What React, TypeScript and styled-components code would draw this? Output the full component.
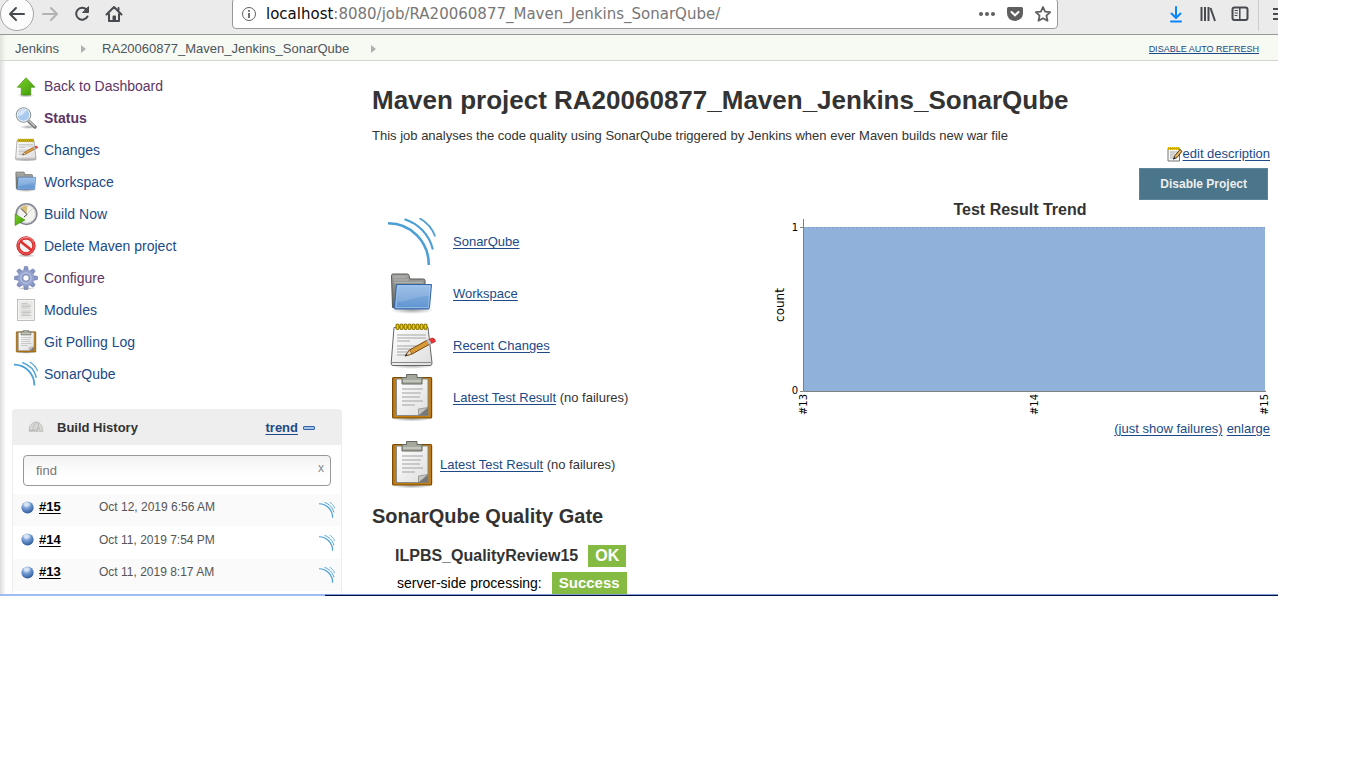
import React from "react";
import styled, { createGlobalStyle } from "styled-components";

const sans = `"Liberation Sans", Arial, sans-serif`;
const ui = `"DejaVu Sans", sans-serif`;

const GlobalStyle = createGlobalStyle`
  * { box-sizing: border-box; }
  body { margin: 0; background: #fff; color: #333; font: 13px/18px ${sans}; }
  h1, h2, h3, p, ul { margin: 0; padding: 0; }
  ul { list-style: none; }
  svg { display: block; flex: none; }
  button { cursor: pointer; }
`;

const Screen = styled.div`
  margin-right: 88px;
  overflow: hidden;
`;

/* Browser toolbar */
const Toolbar = styled.header`
  display: flex;
  align-items: center;
  height: 35px;
  padding-bottom: 7px;
  background: #ebebeb;
  border-bottom: 1px solid #999;
`;
const BackButton = styled.button`
  display: flex;
  align-items: center;
  justify-content: center;
  flex: none;
  width: 34px;
  height: 34px;
  padding: 0;
  border: 1px solid #a6a6a6;
  border-radius: 50%;
  background: #fcfcfc;
`;
const ToolButton = styled.button`
  display: flex;
  align-items: center;
  justify-content: center;
  flex: none;
  width: 32px;
  height: 28px;
  padding: 0;
  border: 0;
  background: none;
`;
const AddressBox = styled.div`
  display: flex;
  align-items: center;
  flex: 0 1 826px;
  min-width: 0;
  height: 31px;
  margin-left: 102px;
  padding: 0 0 0 8px;
  border: 1px solid #999;
  border-radius: 4px;
  background: #fff;
`;
const Address = styled.div`
  flex: 1;
  min-width: 0;
  overflow: hidden;
  margin-left: 9px;
  white-space: nowrap;
  font: 15px/20px ${ui};
  color: #777;
  b { font-weight: 400; color: #0c0c0d; }
`;
const SlimButton = styled(ToolButton)`
  width: 28px;
`;
const ToolGroup = styled.div`
  display: flex;
  flex: 1 0 120px;
  justify-content: flex-end;
  align-items: center;
`;
const MenuSlot = styled.div`
  display: flex;
  align-items: center;
  justify-content: flex-end;
  width: 20px;
  height: 34px;
  margin-left: 2px;
  border-left: 1px solid #ccc;
`;

/* Breadcrumb bar */
const Crumbs = styled.nav`
  display: flex;
  align-items: center;
  height: 26px;
  padding: 2px 19px 0 15px;
  border-bottom: 1px solid #d3d7cf;
  background: linear-gradient(90deg, #dfe2dc, transparent 6px) #f6faf2;
`;
const Crumb = styled.a`
  color: #4d545d;
  text-decoration: none;
`;
const CrumbArrow = styled.span`
  margin: 0 16px 0 22px;
  border: 4px solid transparent;
  border-left: 5px solid #b0b0b0;
  border-right: 0;
`;
const RefreshLink = styled.a`
  margin-left: auto;
  font-size: 9px;
  line-height: 12px;
  text-transform: uppercase;
  color: #204a87;
  border-bottom: 1px solid #204a87;
  text-decoration: none;
  height: 11px;
`;

const Link = styled.a`
  color: #204a87;
  text-decoration: underline;
  text-underline-offset: 2px;
`;

const Body = styled.div`
  display: flex;
  align-items: stretch;
  background: linear-gradient(90deg, #dcdcdc, transparent 6px);
`;
const Sidebar = styled.aside`
  display: flex;
  flex-direction: column;
  flex: none;
  width: 342px;
  padding: 9px 0 0 12px;
`;
const Task = styled.li`
  height: 32px;
`;
const TaskLink = styled.a<{ $visited?: boolean; $bold?: boolean }>`
  display: inline-flex;
  align-items: center;
  gap: 6px;
  height: 32px;
  padding-left: 2px;
  font-size: 14px;
  font-weight: ${(p) => (p.$bold ? 700 : 400)};
  color: ${(p) => (p.$visited ? "#5c3566" : "#204a87")};
  text-decoration: none;
`;

/* Build history */
const Panel = styled.section`
  flex: 1;
  margin-top: 19px;
  border: 1px solid #eee;
  border-bottom: 0;
  border-radius: 4px 4px 0 0;
  background: #fff;
`;
const PanelHead = styled.div`
  display: flex;
  align-items: center;
  height: 35px;
  padding: 0 26px 0 15px;
  background: #eee;
  font-weight: 700;
`;
const PanelTitle = styled.h3`
  flex: 1;
  margin-left: 13px;
  font-size: 13px;
`;
const Collapse = styled.button`
  width: 12px;
  height: 4px;
  margin-left: 5px;
  padding: 0;
  border: 1px solid #3465a4;
  border-radius: 1px;
  background: #a5c3ea;
`;
const Search = styled.div`
  display: flex;
  height: 31px;
  margin: 10px 10px 8px;
  border: 1px solid #999;
  border-radius: 4px;
  background: linear-gradient(#f3f3f3, #fff 20px);
`;
const SearchInput = styled.input`
  flex: 1;
  min-width: 0;
  padding: 0 12px;
  border: 0;
  outline: 0;
  background: none;
  font: 13px ${sans};
  &::placeholder { color: #777; opacity: 1; }
`;
const ClearButton = styled.button`
  padding: 0 6px 6px;
  border: 0;
  background: none;
  color: #888;
  font: 12px ${sans};
`;
const Builds = styled.table`
  width: 100%;
  border-collapse: collapse;
  font-size: 12px;
  tr:nth-child(odd) { background: #fafafa; }
  td { height: 32px; padding: 0 0 6px; vertical-align: middle; color: #555; }
  tr:nth-child(even) td { height: 33px; }
  td:last-child { padding: 0 6px 0 0; }
`;
const BuildCell = styled.div`
  display: flex;
  align-items: center;
  gap: 5px;
  padding-left: 8px;
`;
const BuildLink = styled.a`
  font-weight: 700;
  font-size: 13px;
  line-height: 16px;
  color: #000;
  text-underline-offset: 2px;
`;
const EndIcon = styled.div`
  display: flex;
  justify-content: flex-end;
`;

/* Main panel */
const Main = styled.main`
  flex: 1;
  min-width: 0;
  padding: 23px 8px 0 30px;
`;
const Title = styled.h1`
  font-size: 26px;
  line-height: 32px;
  white-space: nowrap;
`;
const Description = styled.p`
  margin-top: 11px;
`;
const Columns = styled.div`
  display: flex;
  justify-content: space-between;
  align-items: flex-start;
`;
const LinkList = styled.ul`
  padding: 71px 0 0 16px;
`;
const BigLink = styled.li<{ $gap: number; $top?: number }>`
  display: flex;
  align-items: center;
  gap: ${(p) => p.$gap}px;
  height: 52px;
  margin-top: ${(p) => p.$top || 0}px;
`;
const Aside = styled.div`
  display: flex;
  flex-direction: column;
  align-items: flex-end;
  width: 500px;
`;
const EditLine = styled.div`
  display: flex;
  align-items: center;
  height: 18px;
`;
const DisableButton = styled.button`
  height: 32px;
  margin: 5px 2px 0 0;
  padding: 0 20px;
  border: 1px solid #5d8599;
  background: #4b758b;
  color: #eee;
  font: 700 12px ${sans};
`;
const ChartTitle = styled.h3`
  width: 100%;
  padding-top: 1px;
  font-size: 16px;
  line-height: 18px;
  text-align: center;
`;
const ChartLinks = styled.div`
  display: flex;
  gap: 4px;
  margin-top: 1px;
`;
const Gate = styled.section`
  margin-top: 13px;
  h2 { font-size: 20px; line-height: 24px; }
`;
const GateRow = styled.div<{ $strong?: boolean }>`
  display: flex;
  align-items: center;
  gap: 10px;
  height: 22px;
  margin-top: ${(p) => (p.$strong ? 17 : 5)}px;
  padding-left: ${(p) => (p.$strong ? 23 : 25)}px;
  font-size: ${(p) => (p.$strong ? 16 : 14)}px;
  font-weight: ${(p) => (p.$strong ? 700 : 400)};
  color: ${(p) => (p.$strong ? "#333" : "#000")};
`;
const Badge = styled.span<{ $large?: boolean }>`
  padding: 0 7px;
  background: #85bb43;
  color: #fff;
  font-size: ${(p) => (p.$large ? 16 : 15)}px;
  font-weight: 700;
  line-height: 22px;
`;
const BottomEdge = styled.footer`
  height: 2px;
  background: linear-gradient(90deg, #9dbcf0 325px, transparent 325px),
    linear-gradient(#7f9fdc 1px, #04103c 1px);
`;

type IconProps = { size?: number };

const Svg = ({ size = 24, children }: IconProps & { children: React.ReactNode }) => (
  <svg width={size} height={size} viewBox="0 0 48 48" fill="none" aria-hidden="true">{children}</svg>
);

const HiddenDefs = styled.svg`
  position: absolute;
`;
const Gradients = () => (
  <HiddenDefs width="0" height="0" aria-hidden="true">
    <defs>
      <linearGradient id="green" x1="0" y1="0" x2="1" y2="1"><stop stopColor="#7ed32c" /><stop offset="1" stopColor="#3b9a06" /></linearGradient>
      <linearGradient id="blue" x1="0" y1="0" x2="0" y2="1"><stop stopColor="#8db6e4" /><stop offset="1" stopColor="#5f93d0" /></linearGradient>
      <linearGradient id="grey" x1="0" y1="0" x2="0" y2="1"><stop stopColor="#a5a6a2" /><stop offset="1" stopColor="#60625f" /></linearGradient>
      <linearGradient id="paper" x1="0" y1="0" x2="1" y2="1"><stop stopColor="#fff" /><stop offset="1" stopColor="#dedede" /></linearGradient>
      <radialGradient id="ball" cx=".4" cy=".25" r=".75"><stop stopColor="#d4e4f7" /><stop offset=".5" stopColor="#7199d0" /><stop offset="1" stopColor="#2d5a9c" /></radialGradient>
      <radialGradient id="shade"><stop stopColor="#000" stopOpacity=".35" /><stop offset="1" stopColor="#000" stopOpacity="0" /></radialGradient>
    </defs>
  </HiddenDefs>
);

const SonarIcon = ({ size, weight = 2.6 }: IconProps & { weight?: number }) => (
  <Svg size={size}>
    <g stroke="#4b9fd5">
      <path d="M0 5.300C23 5.300 40.800 23.500 40.800 47" strokeWidth={weight} />
      <path d="M16.500 1.200C30.500 5.500 41.500 17 44.800 31.500" strokeWidth={weight * 0.8} />
      <path d="M31.500 .2C38.500 4 44.500 11 47.200 18.500" strokeWidth={weight * 0.65} />
    </g>
  </Svg>
);
const FolderIcon = ({ size }: IconProps) => (
  <Svg size={size}>
    <ellipse cx="24" cy="40" rx="22" ry="4" fill="url(#shade)" />
    <path d="M4.500 37.500L3.500 5.500Q3.500 4 5 4H19.500Q20.500 4 21 5.500L21.800 9H35.500Q37 9 37 10.500V36z" fill="url(#grey)" stroke="#555753" />
    <path d="M6 7H18M6 10H20M6 12.500H35" stroke="#c0c1be" strokeWidth=".7" />
    <path d="M8.500 14.500H43.500L41.500 37.500Q41.300 39 40 39H7Q6 39 6.200 37.500z" fill="url(#blue)" stroke="#3465a4" />
    <path d="M9.800 15.800H42L40.500 37.500H8z" stroke="#b1d0f2" strokeOpacity=".6" />
    <path d="M10 16H42L41 26C28 26 22 31 9 32z" fill="#fff" opacity=".14" />
  </Svg>
);
const Rings = () => (
  <g stroke="#8c7200" strokeWidth="1.200" fill="#edd400">
    {[8, 12, 16, 20, 24, 28, 32, 36].map((x) => <rect key={x} x={x} y="3" width="3" height="5.500" rx="1.500" />)}
  </g>
);
const NotepadIcon = ({ size }: IconProps) => (
  <Svg size={size}>
    <g transform="translate(0 -1)">
      <ellipse cx="24" cy="44.500" rx="22" ry="3.500" fill="url(#shade)" />
      <path d="M6 6.500H40L44 42Q44 44.500 42 44.500H5Q3 44.500 3.200 42z" fill="url(#paper)" stroke="#666" />
      <path d="M4 41.500H43" stroke="#888" />
      <Rings />
      <path d="M9 14H38M9 17H38M9 20H22M9 25H32M9 28H28M9 31H24M9 34H20" stroke="#a5a5a5" />
      <path d="M17 35l4.500-6L39.500 19l2.500 4L24 33z" fill="#d99a3c" stroke="#784708" />
      <path d="M17 35l4.500-6 2.500 4z" fill="#e8d4b0" stroke="#784708" strokeWidth=".7" />
      <path d="M41 18.500l3-1.500q3 0 3.500 3.500l-4 2z" fill="#e33" stroke="#a22" strokeWidth=".7" />
      <path d="M38.500 19.600l2.500-1.200 2.400 4-2.400 1.200z" fill="#c8c8c8" stroke="#999" strokeWidth=".5" />
      <path d="M17 35l1.500-2.200 1 1.500z" fill="#222" />
    </g>
  </Svg>
);
const ClipboardIcon = ({ size }: IconProps) => (
  <Svg size={size}>
    <g transform="translate(0 -1)">
      <ellipse cx="24" cy="46" rx="20" ry="2.500" fill="url(#shade)" />
      <rect x="4.600" y="4.500" width="39" height="40.500" rx="1" fill="#c17d11" stroke="#7a4b05" strokeWidth="1.200" />
      <rect x="8.500" y="6" width="31.500" height="36.500" fill="url(#paper)" stroke="#888a85" />
      <path d="M14 16H35M14 20H33M14 24H32M14 28H35M14 32H27" stroke="#bcbcbc" strokeWidth="1.500" />
      <path d="M40 34.500V42.500H30.500z" fill="#777" /><path d="M30.500 42.500V36L40 34.500z" fill="#c5c7c2" stroke="#777" strokeWidth=".6" />
      <path d="M18.500 4.500V1.500H29V4.500H34V11H14V4.500z" fill="#a5a89c" stroke="#656860" />
      <path d="M15 8H33" stroke="#cdd0c5" strokeWidth="1.500" />
    </g>
  </Svg>
);
const UpIcon = () => (
  <Svg>
    <ellipse cx="24" cy="43" rx="17" ry="4" fill="url(#shade)" />
    <path d="M24 7.500L42 26.500H33.500V42H14.500V26.500H6.500z" fill="url(#green)" stroke="#3a8a05" strokeWidth="1.200" />
  </Svg>
);
const MagnifierIcon = () => (
  <Svg>
    <ellipse cx="29" cy="42" rx="18" ry="4" fill="url(#shade)" />
    <path d="M30 31L42 42" stroke="#777a75" strokeWidth="7" strokeLinecap="round" />
    <path d="M29 29L41 40" stroke="#c8cac6" strokeWidth="2.500" strokeLinecap="round" />
    <circle cx="19" cy="18" r="14.500" fill="#a9c9ee" stroke="#8a8d88" strokeWidth="2" />
    <circle cx="19" cy="18" r="12.500" stroke="#f0f3f6" strokeWidth="2" />
    <path d="M8.500 20C8.500 8 18.500 7 25.500 9C18.500 12 20.500 20 8.500 20z" fill="#fff" opacity=".55" />
  </Svg>
);
const ClockIcon = () => (
  <Svg>
    <circle cx="25" cy="24" r="20.500" fill="#f4f3ee" stroke="#85868f" strokeWidth="3.500" />
    <circle cx="25" cy="24" r="18" stroke="#d0d0dc" strokeWidth="2" />
    <path d="M25 24L13 12Q20 5 27 8z" fill="#d9c07a" />
    <path d="M14 13L26 25L20 30" stroke="#444" strokeWidth="2" />
    <path d="M26 24L37 13" stroke="#aaa" strokeWidth="1" />
    <path d="M2 24L22 36L2 47z" fill="url(#green)" stroke="#347a09" />
  </Svg>
);
const NoEntryIcon = () => (
  <Svg>
    <ellipse cx="24" cy="43" rx="20" ry="4" fill="url(#shade)" />
    <circle cx="24" cy="23.500" r="16" fill="#f4f0f0" stroke="#b81414" strokeWidth="6.500" />
    <circle cx="24" cy="23.500" r="16" stroke="#e84a4a" strokeWidth="4.500" />
    <path d="M12 14L36 33" stroke="#dd3030" strokeWidth="5.500" />
    <path d="M8 18Q12 6 26 6.500Q36 7 40 16" stroke="#f9a8a8" strokeWidth="1.500" />
  </Svg>
);
const GearIcon = () => (
  <Svg>
    <ellipse cx="24" cy="45" rx="18" ry="3" fill="url(#shade)" />
    <g fill="#8796c4" stroke="#5d6b9e" strokeWidth="1">
      {[0, 45, 90, 135, 180, 225, 270, 315].map((a) => (
        <path key={a} d="M18.500 12L21 1H27L29.500 12z" transform={`rotate(${a} 24 24)`} />
      ))}
    </g>
    <circle cx="24" cy="24" r="16" fill="#95a4cf" />
    <circle cx="24" cy="24" r="10.500" stroke="#bcc6e4" strokeWidth="2" />
    <circle cx="24" cy="24" r="6.500" fill="#fff" stroke="#5d6b9e" strokeWidth="1.500" />
  </Svg>
);
const DocIcon = () => (
  <Svg>
    <rect x="7" y="3" width="34" height="42" fill="#e9e9e7" stroke="#aaa" strokeWidth="1.500" />
    <rect x="9" y="5" width="30" height="38" stroke="#fafafa" strokeWidth="1.500" />
    <path d="M15 11H27M15 14H33M15 17H34M15 20H31M15 26H34M15 29H34M15 32H30M15 35H34" stroke="#bbb" strokeWidth="1.500" />
  </Svg>
);
const HelmetIcon = () => (
  <Svg size={16}>
    <g transform="translate(0 -5)">
      <path d="M3 36Q2 22 14 14Q28 6 38 18Q45 26 44 38L34 36V28L28 36z" fill="#d8d8d5" stroke="#b0b0ae" strokeWidth="2" />
      <path d="M14 34Q16 20 25 12M27 34Q34 22 30 12M3 36H30" stroke="#aaa" strokeWidth="2" />
      <path d="M3 39H46" stroke="#c4c4c2" strokeWidth="3" />
    </g>
  </Svg>
);
const BallIcon = () => (
  <Svg size={13}>
    <circle cx="24" cy="24" r="22.500" fill="url(#ball)" />
    <ellipse cx="22" cy="13" rx="12" ry="8" fill="#fff" opacity=".4" />
  </Svg>
);
const NoteEditIcon = () => (
  <svg width="16" height="16" viewBox="0 0 16 16" fill="none" aria-hidden="true">
    <path d="M1 2.500H12.500V15H1z" fill="#f8f8f8" stroke="#777" />
    <path d="M1 2.500H12.500" stroke="#d4b400" strokeWidth="3" strokeDasharray="1.500 .5" />
    <path d="M3 6H10M3 8H8M3 10H7M3 12H6" stroke="#aaa" />
    <path d="M6.500 13L8 9.500L13 3.500L15 5.300L10 11.500z" fill="#e9b860" stroke="#4d3510" />
    <path d="M6 13.500L7 11L8.500 12.500z" fill="#222" />
  </svg>
);

const BrowserIcon = ({ children, color = "#474b4f" }: { children: React.ReactNode; color?: string }) => (
  <svg width="18" height="18" viewBox="0 0 18 18" fill="none" stroke={color} strokeWidth="2" strokeLinecap="round" strokeLinejoin="round" aria-hidden="true">{children}</svg>
);

const tasks: { label: string; icon: React.ReactNode; visited?: boolean; bold?: boolean }[] = [
  { label: "Back to Dashboard", icon: <UpIcon />, visited: true },
  { label: "Status", icon: <MagnifierIcon />, visited: true, bold: true },
  { label: "Changes", icon: <NotepadIcon /> },
  { label: "Workspace", icon: <FolderIcon /> },
  { label: "Build Now", icon: <ClockIcon /> },
  { label: "Delete Maven project", icon: <NoEntryIcon /> },
  { label: "Configure", icon: <GearIcon />, visited: true },
  { label: "Modules", icon: <DocIcon /> },
  { label: "Git Polling Log", icon: <ClipboardIcon /> },
  { label: "SonarQube", icon: <SonarIcon size={24} weight={3.6} /> },
];
const builds = [
  ["#15", "Oct 12, 2019 6:56 AM"],
  ["#14", "Oct 11, 2019 7:54 PM"],
  ["#13", "Oct 11, 2019 8:17 AM"],
];

const TrendChart = () => (
  <svg width="500" height="200" viewBox="0 0 500 200" role="img" aria-label="Test Result Trend">
    <rect x="34" y="8" width="461" height="164" fill="#8fb1da" />
    <path d="M34 8.500H495" stroke="#7f9fc8" strokeDasharray="2 2" />
    <path d="M33.500 0V172.500H496M30 8.500H33M30 172.500H33" stroke="#808080" fill="none" />
    <g fontFamily="DejaVu Sans, sans-serif" fontSize="10" fill="#000">
      <text x="28" y="12" textAnchor="end">1</text>
      <text x="28" y="175" textAnchor="end">0</text>
      <text transform="translate(14 86) rotate(-90)" textAnchor="middle" fontSize="12">count</text>
      <text transform="translate(37 175) rotate(-90)" textAnchor="end">#13</text>
      <text transform="translate(268 175) rotate(-90)" textAnchor="end">#14</text>
      <text transform="translate(498 175) rotate(-90)" textAnchor="end">#15</text>
    </g>
  </svg>
);

export default function App() {
  return (
    <Screen>
      <GlobalStyle />
      <Gradients />
      <Toolbar>
        <BackButton aria-label="Back"><BrowserIcon><path d="M2 9H16M8 3L2 9L8 15" /></BrowserIcon></BackButton>
        <ToolButton aria-label="Forward"><BrowserIcon color="#b2b2b2"><path d="M2 9H16M10 3L16 9L10 15" /></BrowserIcon></ToolButton>
        <ToolButton aria-label="Reload">
          <BrowserIcon><path d="M13.500 4.500A6 6 0 1 0 14.500 11.500" /><path d="M15.500 2V7.500H10z" fill="#474b4f" strokeWidth="1" /></BrowserIcon>
        </ToolButton>
        <ToolButton aria-label="Home">
          <BrowserIcon><path d="M1.500 9.500L9 2L16.500 9.500M4 9V16H14V9" /><path d="M8.500 16V11.500H10V16" /><path d="M13.500 3V5" /></BrowserIcon>
        </ToolButton>
        <AddressBox>
          <svg width="16" height="16" viewBox="0 0 16 16" fill="none" stroke="#5f5f5f" aria-hidden="true">
            <circle cx="8" cy="8" r="6.500" /><path d="M8 7V12M8 4V5.800" strokeWidth="1.800" />
          </svg>
          <Address><b>localhost</b>:8080/job/RA20060877_Maven_Jenkins_SonarQube/</Address>
          <SlimButton aria-label="Page actions">
            <svg width="18" height="18" fill="#5f5f5f" aria-hidden="true"><circle cx="3" cy="9" r="2" /><circle cx="9" cy="9" r="2" /><circle cx="15" cy="9" r="2" /></svg>
          </SlimButton>
          <SlimButton aria-label="Save to Pocket">
            <svg width="18" height="18" fill="none" aria-hidden="true"><path d="M2.500 2H15.500Q17 2 17 3.500V8Q17 15 9 16Q1 15 1 8V3.500Q1 2 2.500 2z" fill="#5f5f5f" /><path d="M5.500 7L9 10.300L12.500 7" stroke="#fff" strokeWidth="2" strokeLinecap="round" /></svg>
          </SlimButton>
          <SlimButton aria-label="Bookmark">
            <BrowserIcon color="#5f5f5f"><path strokeWidth="1.800" d="M9 2L11.100 6.700L16.200 7.200L12.400 10.600L13.500 15.800L9 13.200L4.500 15.800L5.600 10.600L1.800 7.200L6.900 6.700z" /></BrowserIcon>
          </SlimButton>
        </AddressBox>
        <ToolGroup>
          <ToolButton aria-label="Downloads"><BrowserIcon color="#0a84ff"><path d="M9 2V12.500M4.500 8.500L9 13L13.500 8.500M4 16.500H14" /></BrowserIcon></ToolButton>
          <ToolButton aria-label="Library"><BrowserIcon><path strokeLinecap="butt" d="M2.500 2V16M6 2V16M9.500 2V16M11.500 3L16 16" /></BrowserIcon></ToolButton>
          <ToolButton aria-label="Sidebars"><BrowserIcon><rect x="1.500" y="2.500" width="15" height="12.500" rx="2" /><path strokeWidth="1.500" d="M8.800 3V15" /><path strokeWidth="1" d="M4 5.500H6.500M4 8H6.500M4 10.500H6" /></BrowserIcon></ToolButton>
          <MenuSlot>
            <svg width="6" height="14" aria-hidden="true"><path d="M1 2H6M1 7H6M1 12H6" stroke="#474b4f" strokeWidth="2" /></svg>
          </MenuSlot>
        </ToolGroup>
      </Toolbar>
      <Crumbs>
        <Crumb href="#">Jenkins</Crumb><CrumbArrow />
        <Crumb href="#">RA20060877_Maven_Jenkins_SonarQube</Crumb><CrumbArrow />
        <RefreshLink href="#">Disable auto refresh</RefreshLink>
      </Crumbs>
      <Body>
        <Sidebar>
          <ul>
            {tasks.map((t) => (
              <Task key={t.label}><TaskLink href="#" $visited={t.visited} $bold={t.bold}>{t.icon}{t.label}</TaskLink></Task>
            ))}
          </ul>
          <Panel>
            <PanelHead>
              <HelmetIcon />
              <PanelTitle>Build History</PanelTitle>
              <Link href="#">trend</Link>
              <Collapse aria-label="Collapse" />
            </PanelHead>
            <Search>
              <SearchInput placeholder="find" aria-label="Find builds" />
              <ClearButton>x</ClearButton>
            </Search>
            <Builds>
              <tbody>
                {builds.map(([id, date]) => (
                  <tr key={id}>
                    <td width="86"><BuildCell><BallIcon /><BuildLink href="#">{id}</BuildLink></BuildCell></td>
                    <td>{date}</td>
                    <td><EndIcon><SonarIcon size={16} weight={3.6} /></EndIcon></td>
                  </tr>
                ))}
              </tbody>
            </Builds>
          </Panel>
        </Sidebar>
        <Main>
          <Title>Maven project RA20060877_Maven_Jenkins_SonarQube</Title>
          <Description>This job analyses the code quality using SonarQube triggered by Jenkins when ever Maven builds new war file</Description>
          <Columns>
            <LinkList>
              <BigLink $gap={17}><SonarIcon size={48} /><Link href="#">SonarQube</Link></BigLink>
              <BigLink $gap={17}><FolderIcon size={48} /><Link href="#">Workspace</Link></BigLink>
              <BigLink $gap={17}><NotepadIcon size={48} /><Link href="#">Recent Changes</Link></BigLink>
              <BigLink $gap={17}><ClipboardIcon size={48} /><span><Link href="#">Latest Test Result</Link> (no failures)</span></BigLink>
              <BigLink $gap={4} $top={15}><ClipboardIcon size={48} /><span><Link href="#">Latest Test Result</Link> (no failures)</span></BigLink>
            </LinkList>
            <Aside>
              <EditLine><NoteEditIcon /><Link href="#">edit description</Link></EditLine>
              <DisableButton>Disable Project</DisableButton>
              <ChartTitle>Test Result Trend</ChartTitle>
              <TrendChart />
              <ChartLinks><Link href="#">(just show failures)</Link><Link href="#">enlarge</Link></ChartLinks>
            </Aside>
          </Columns>
          <Gate>
            <h2>SonarQube Quality Gate</h2>
            <GateRow $strong>ILPBS_QualityReview15 <Badge $large>OK</Badge></GateRow>
            <GateRow>server-side processing: <Badge>Success</Badge></GateRow>
          </Gate>
        </Main>
      </Body>
      <BottomEdge />
    </Screen>
  );
}
